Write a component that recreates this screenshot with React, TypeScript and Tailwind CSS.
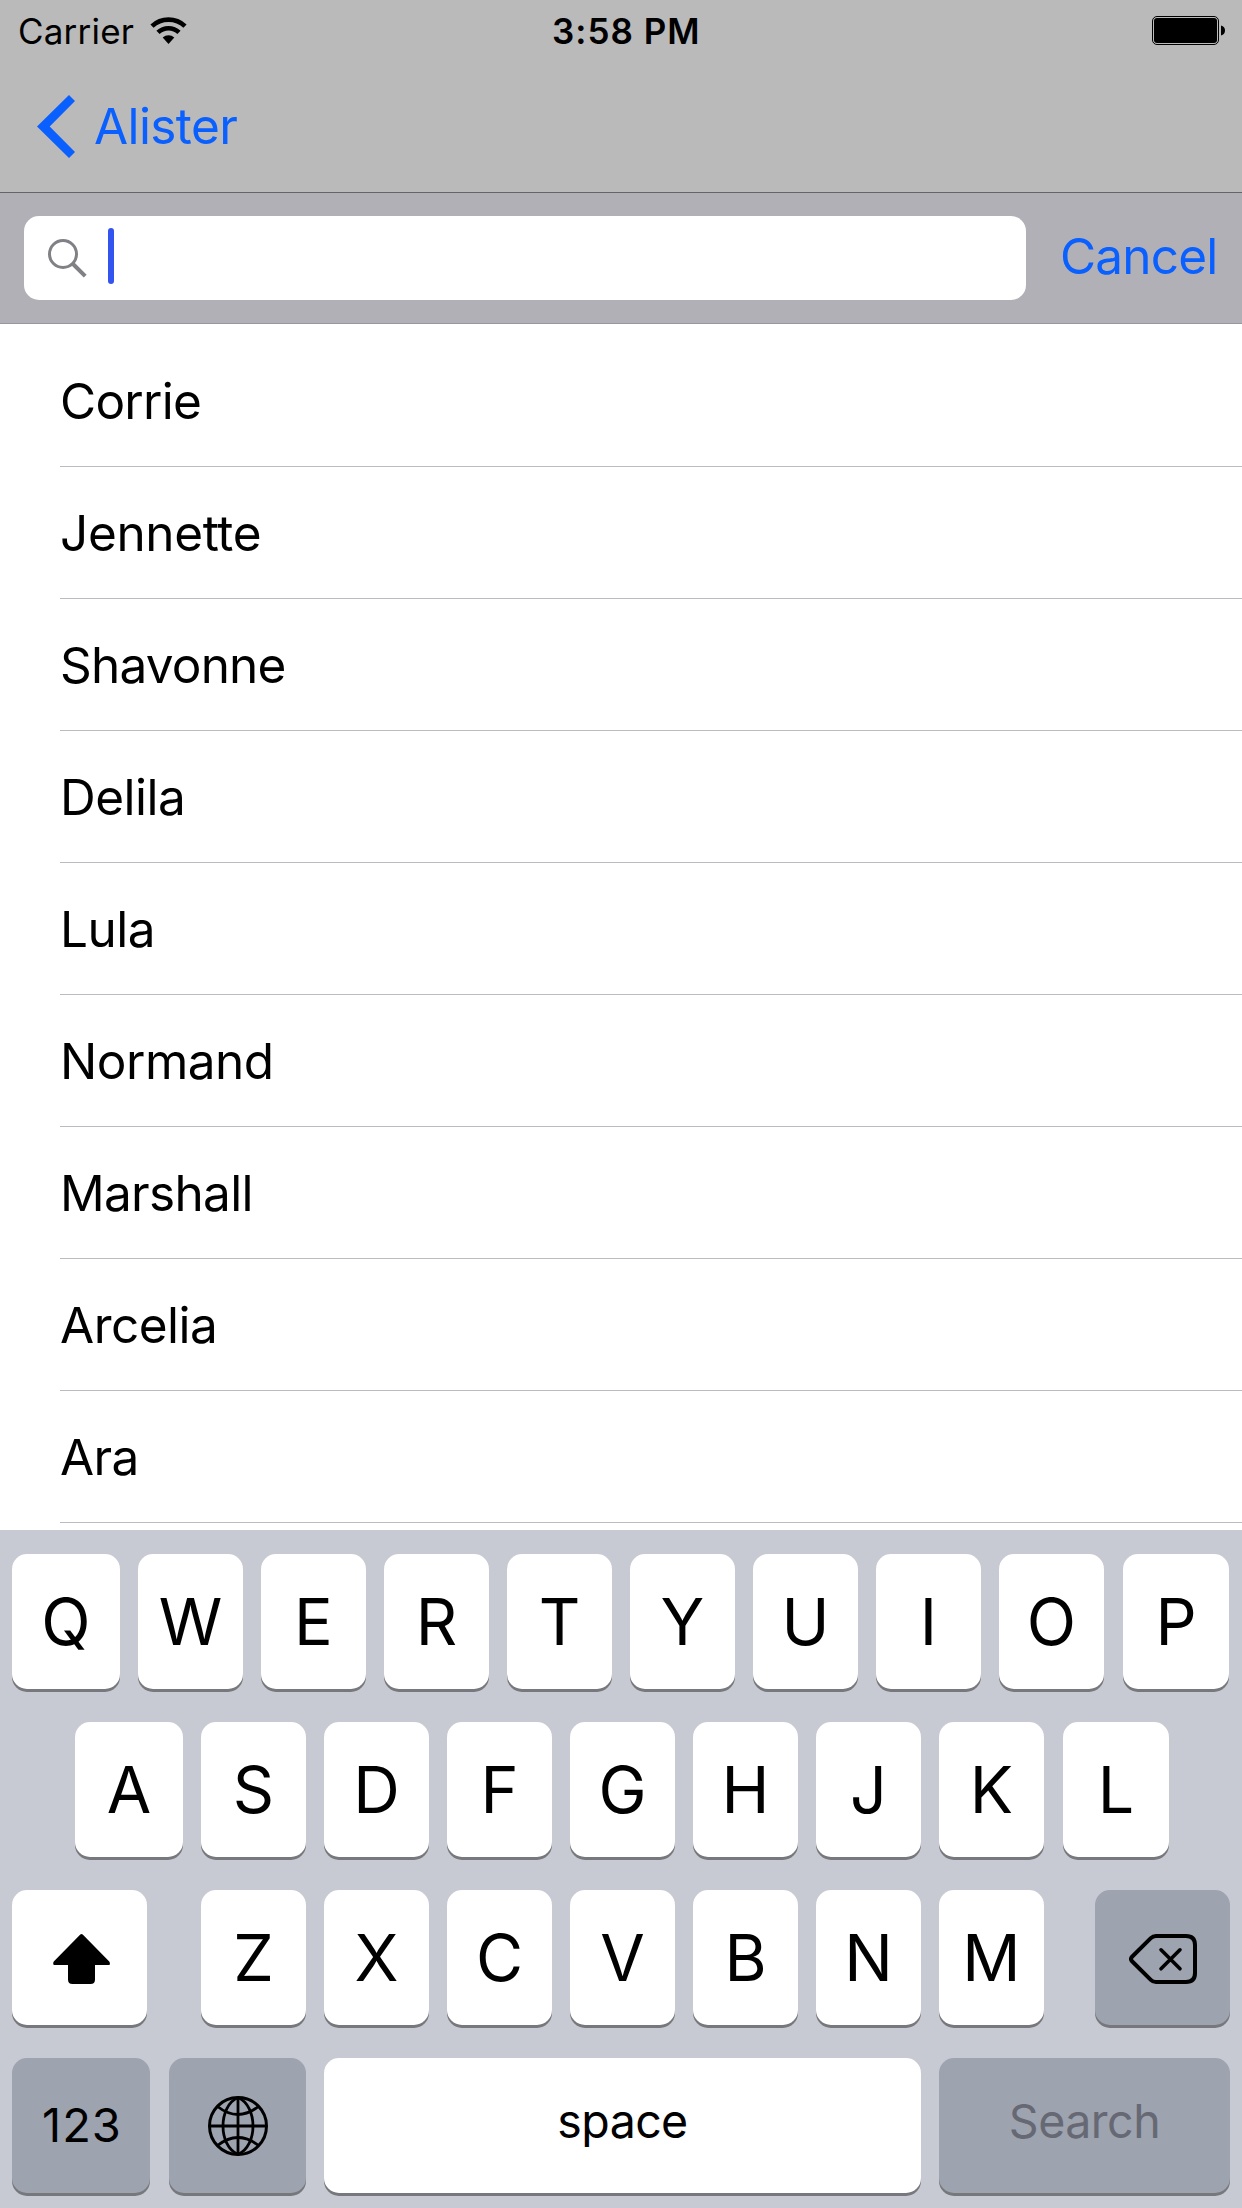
import type { ReactNode } from "react";

const contacts = [
  { name: "Corrie", tracking: "tracking-[-0.75px]" },
  { name: "Jennette", tracking: "tracking-[-0.36px]" },
  { name: "Shavonne", tracking: "tracking-[-0.8px]" },
  { name: "Delila", tracking: "tracking-[-0.5px]" },
  { name: "Lula", tracking: "tracking-[-0.5px]" },
  { name: "Normand", tracking: "tracking-[-0.5px]" },
  { name: "Marshall", tracking: "tracking-[-0.7px]" },
  { name: "Arcelia", tracking: "tracking-[-0.5px]" },
  { name: "Ara", tracking: "tracking-[-0.7px]" },
];

function Key({
  children,
  width = "w-[105px]",
  tone = "bg-white",
  text = "pt-[2px] text-[64.5px]",
}: {
  children: ReactNode;
  width?: string;
  tone?: string;
  text?: string;
}) {
  return (
    <button
      className={`flex h-[135px] shrink-0 items-center justify-center rounded-[15px] leading-none shadow-[0_3px_0_#77787c] ${width} ${tone} ${text}`}
    >
      {children}
    </button>
  );
}

function StatusBar() {
  return (
    <div className="flex h-[60px] items-center pt-[2px] text-[35px] leading-none">
      <div className="flex w-[552px] items-center pl-[18px]">
        <span className="w-[132px] tracking-[0.2px]">Carrier</span>
        <svg className="-mt-[2px]" width="37" height="27" viewBox="0 0 37 27">
          <path d="M2 9.2a24 24 0 0 1 33 0" fill="none" stroke="#000" strokeWidth="4.6" />
          <path d="M8 15.4a15.2 15.2 0 0 1 21 0" fill="none" stroke="#000" strokeWidth="4.6" />
          <path d="M12.7 20.4a8.6 8.6 0 0 1 11.6 0L18.5 27z" />
        </svg>
      </div>
      <span className="font-semibold tracking-[1px]">3:58 PM</span>
      <svg className="-mt-[2px] mr-[17px] ml-auto" width="73" height="29" viewBox="0 0 73 29">
        <rect x="0.5" y="0.5" width="66" height="28" rx="4.5" fill="none" stroke="#000" />
        <rect x="2" y="2" width="63" height="25" rx="3" />
        <path d="M69 9.5c2.7.6 4 2.5 4 5s-1.3 4.400-4 5z" />
      </svg>
    </div>
  );
}

function NavBar() {
  return (
    <div className="flex h-[132px] items-center pl-[37px] text-[49.5px] leading-none text-[#0a60ff]">
      <svg width="38" height="63" viewBox="0 0 38 63">
        <path d="M32 0 38 6 12.7 31.5 38 57l-6 6L0 31.5z" fill="currentColor" />
      </svg>
      <span className="ml-[19px] pt-[2px] tracking-[-0.6px]">Alister</span>
    </div>
  );
}

function SearchBar() {
  return (
    <div className="flex h-[132px] items-center border-y border-t-[#656565] border-b-[#98979d] bg-[#b1b0b7] pl-6">
      <div className="flex h-[84px] w-[1002px] items-center rounded-[15px] bg-white pl-6">
        <svg className="shrink-0" width="39" height="39" viewBox="0 0 39 39" fill="none" stroke="#808085">
          <circle cx="15" cy="15" r="13.5" strokeWidth="3" />
          <path d="M24.5 24.5 37.2 37.2" strokeWidth="4" />
        </svg>
        <div className="-mt-1 ml-[21px] h-14 w-1.5 rounded-[3px] bg-[#3354ee]" />
      </div>
      <span className="ml-[34px] pb-[2px] text-[49.5px] leading-none tracking-[-0.8px] text-[#0a60ff]">
        Cancel
      </span>
    </div>
  );
}

function ShiftIcon() {
  return (
    <svg className="mt-[3px] ml-[4px]" width="57" height="50" viewBox="0 0 57 50">
      <path d="M27.3.6q1.2-1.2 2.4 0L56 27.3Q57.5 29 56.5 31H42v14.5Q42 50 37.5 50h-18Q15 50 15 45.5V31H.8Q-.5 29 1 27.3z" />
    </svg>
  );
}

function DeleteIcon() {
  return (
    <svg
      className="mt-[3px] ml-[1px]"
      width="68"
      height="50"
      viewBox="0 0 68 50"
      fill="none"
      stroke="#000"
      strokeWidth="4"
      strokeLinecap="round"
      strokeLinejoin="round"
    >
      <path d="M27 2h30q9 0 9 9v28q0 9-9 9H27q-3 0-5.2-2.2L2.8 27Q1.2 25 2.8 23l19-18.8Q24 2 27 2z" />
      <path d="m32 15.8 19 19m0-19-19 19" strokeWidth="3.6" />
    </svg>
  );
}

function GlobeIcon() {
  return (
    <svg className="mt-[1px]" width="60" height="60" viewBox="0 0 60 60" fill="none" stroke="#000" strokeWidth="2.8">
      <circle cx="30" cy="30" r="28.5" strokeWidth="3" />
      <path d="M30 1v58M1 30h58" />
      <path d="M30 1.5C10 10 10 50 30 58.5M30 1.5C50 10 50 50 30 58.5" />
      <path d="M9.5 10.5q20.5 16 41 0M9.5 49.5q20.5-16 41 0" />
    </svg>
  );
}

function Keyboard() {
  return (
    <div className="flex h-[678px] flex-col gap-[33px] bg-[#c8cad3] pt-6 pl-3">
      <div className="flex gap-[18px]">
        <Key width="w-[108px]">Q</Key>
        {"WERTYUIO".split("").map((k) => (
          <Key key={k}>{k}</Key>
        ))}
        <Key width="w-[106px] ml-px">P</Key>
      </div>
      <div className="flex gap-[18px] pl-[63px]">
        <Key width="w-[108px]">A</Key>
        {"SDFGHJK".split("").map((k) => (
          <Key key={k}>{k}</Key>
        ))}
        <Key width="w-[106px] ml-px">L</Key>
      </div>
      <div className="flex">
        <Key width="w-[135px]" text="">
          <ShiftIcon />
        </Key>
        <div className="ml-[54px] flex gap-[18px]">
          {"ZXCVBNM".split("").map((k) => (
            <Key key={k}>{k}</Key>
          ))}
        </div>
        <Key width="w-[135px] ml-[51px]" tone="bg-[#9da3af]" text="">
          <DeleteIcon />
        </Key>
      </div>
      <div className="flex">
        <Key width="w-[138px]" tone="bg-[#9da3af]" text="text-[47px] tracking-[1px] pl-[2px] pb-[2px]">
          123
        </Key>
        <Key width="w-[137px] ml-[19px]" tone="bg-[#9da3af]" text="">
          <GlobeIcon />
        </Key>
        <Key width="w-[597px] ml-[18px]" text="text-[46.5px] tracking-[-0.6px] pb-[8px]">
          space
        </Key>
        <Key
          width="w-[291px] ml-[18px]"
          tone="bg-[#9da3af]"
          text="text-[46.5px] tracking-[-0.5px] pb-[8px] text-[#666973]"
        >
          Search
        </Key>
      </div>
    </div>
  );
}

export default function App() {
  return (
    <div className="flex h-[2208px] w-[1242px] flex-col overflow-hidden bg-white font-[Inter,sans-serif] text-black">
      <header className="bg-[#bababa]">
        <StatusBar />
        <NavBar />
        <SearchBar />
      </header>
      <ul className="h-[1206px] pt-[11px] pl-[60px]">
        {contacts.map(({ name, tracking }) => (
          <li
            key={name}
            className={`flex h-[132px] items-center border-b border-[#bcbbc1] pt-[2px] text-[49.5px] leading-none ${tracking}`}
          >
            {name}
          </li>
        ))}
      </ul>
      <Keyboard />
    </div>
  );
}
